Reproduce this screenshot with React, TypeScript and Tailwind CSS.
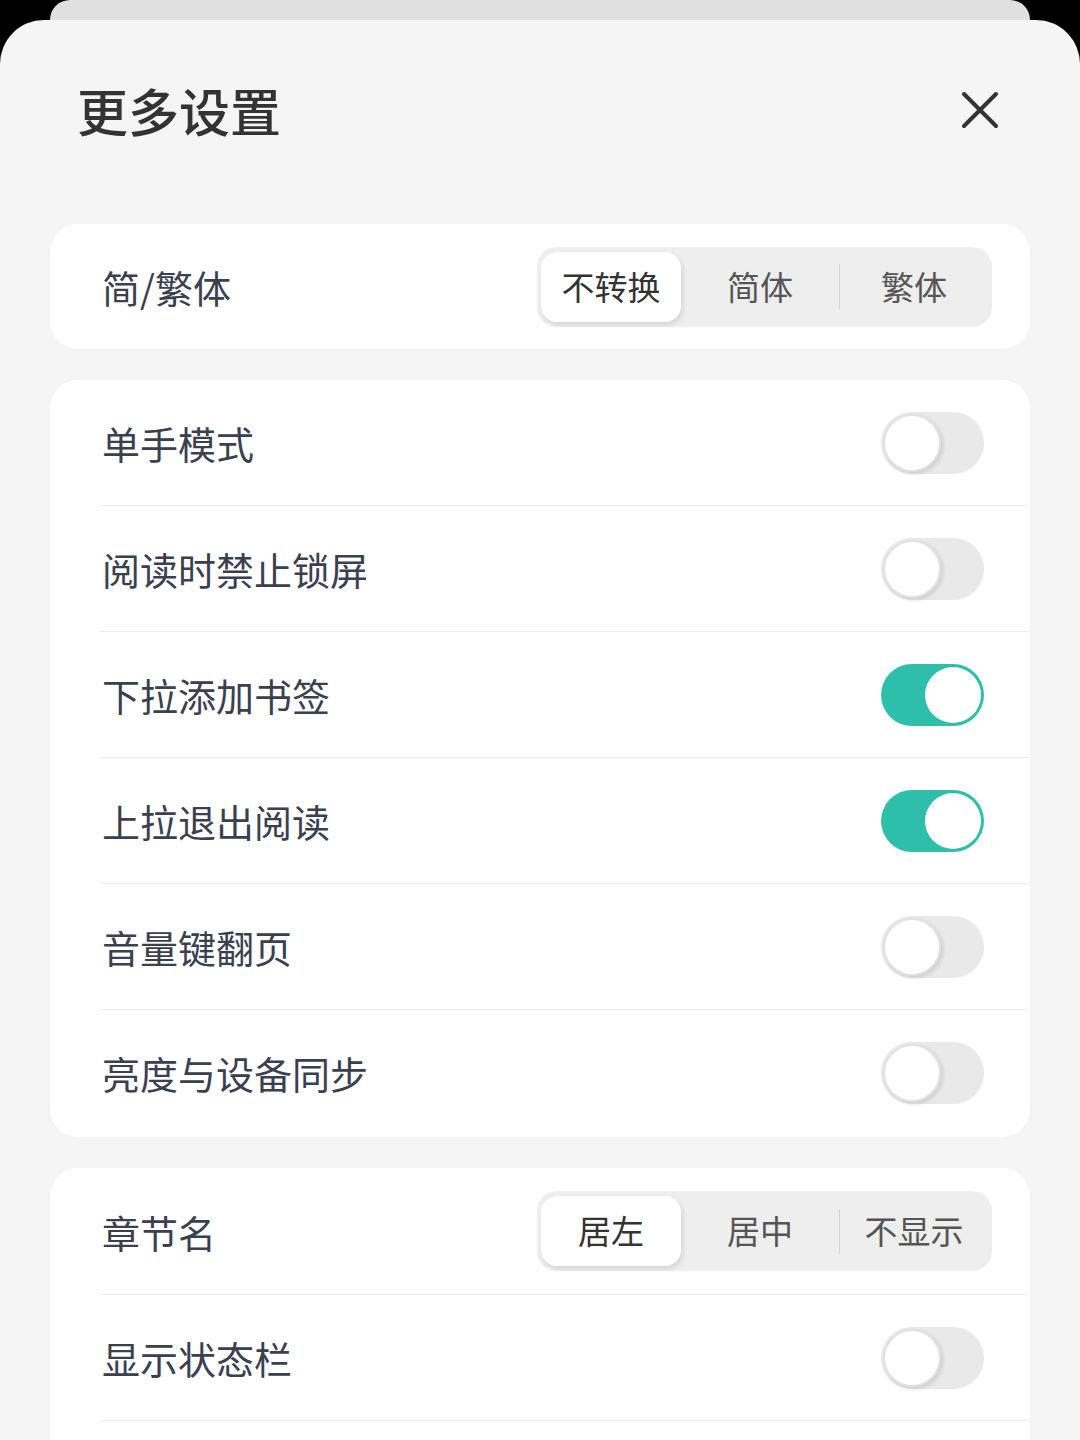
import { useState } from 'react';

const font = { fontFamily: '"Noto Sans CJK SC", "Noto Sans", sans-serif' };

function Toggle({ on, onChange }: { on: boolean; onChange: () => void }) {
  return (
    <button
      onClick={onChange}
      className={`w-[103px] h-[62px] rounded-full flex items-center p-[3px] ${
        on ? 'bg-[#2dbfaa] justify-end' : 'bg-[#e9e9e9] justify-start'
      }`}
    >
      <span
        className={`block rounded-full bg-white ${
          on
            ? 'w-[56px] h-[56px]'
            : 'w-[58px] h-[58px] -ml-[1px] border-[2px] border-[#e2e2e2] shadow-[2px_2px_4px_rgba(0,0,0,0.12)]'
        }`}
      />
    </button>
  );
}

function Segmented({ options, value, onChange }: { options: string[]; value: number; onChange: (i: number) => void }) {
  const widths = ['w-[140px]', 'w-[158px]', 'w-[148px]'];
  return (
    <div className="flex items-center h-[80px] p-[4px] rounded-[20px] bg-[#eeeeee]">
      {options.map((opt, i) => (
        <div key={opt} className="flex items-center h-full">
          {i === 2 && value === 0 && <div className="w-px h-[45px] bg-[#d6d6d6]" />}
          <button
            onClick={() => onChange(i)}
            className={`${widths[i]} h-[70px] rounded-[16px] text-[33px] ${
              value === i
                ? 'bg-white text-[#333] shadow-[2px_3px_5px_rgba(0,0,0,0.1)]'
                : 'text-[#555]'
            }`}
          >
            {opt}
          </button>
        </div>
      ))}
    </div>
  );
}

function Divider() {
  return <div className="ml-[50px] h-px bg-[#ececec]" />;
}

export default function App() {
  const [convert, setConvert] = useState(0);
  const [chapter, setChapter] = useState(0);
  const [toggles, setToggles] = useState<Record<string, boolean>>({
    单手模式: false,
    阅读时禁止锁屏: false,
    下拉添加书签: true,
    上拉退出阅读: true,
    音量键翻页: false,
    亮度与设备同步: false,
    显示状态栏: false,
  });
  const flip = (k: string) => setToggles(t => ({ ...t, [k]: !t[k] }));
  const mainRows = ['单手模式', '阅读时禁止锁屏', '下拉添加书签', '上拉退出阅读', '音量键翻页', '亮度与设备同步'];

  return (
    <div className="w-[1080px] h-[1440px] overflow-hidden bg-black" style={font}>
      <div className="mx-[50px] h-[20px] bg-[#e0e0e0] rounded-t-[22px]" />
      <div className="h-[1420px] bg-[#f5f5f5] rounded-t-[44px] px-[50px]">
        <div className="flex items-center justify-between h-[180px] pl-[27px] pr-[30px]">
          <h1 className="text-[51px] font-medium text-[#333]">更多设置</h1>
          <button className="w-[40px] h-[40px] flex items-center justify-center">
            <svg width="38" height="38" viewBox="0 0 38 38" fill="none" stroke="#333" strokeWidth="4" strokeLinecap="round">
              <path d="M3 3 L35 35 M35 3 L3 35" />
            </svg>
          </button>
        </div>

        <div className="mt-[24px] bg-white rounded-[28px]">
          <div className="flex items-center justify-between h-[125px] pl-[52px] pr-[38px]">
            <span className="text-[38px] text-[#3b4050]">简/繁体</span>
            <Segmented options={['不转换', '简体', '繁体']} value={convert} onChange={setConvert} />
          </div>
        </div>

        <div className="mt-[31px] bg-white rounded-[28px] pb-[2px]">
          {mainRows.map((label, i) => (
            <div key={label}>
              {i > 0 && <Divider />}
              <div className="flex items-center justify-between h-[125px] pl-[52px] pr-[46px]">
                <span className="text-[38px] text-[#3b4050]">{label}</span>
                <Toggle on={toggles[label]} onChange={() => flip(label)} />
              </div>
            </div>
          ))}
        </div>

        <div className="mt-[31px] bg-white rounded-[28px]">
          <div className="flex items-center justify-between h-[126px] pl-[52px] pr-[38px]">
            <span className="text-[38px] text-[#3b4050]">章节名</span>
            <Segmented options={['居左', '居中', '不显示']} value={chapter} onChange={setChapter} />
          </div>
          <Divider />
          <div className="flex items-center justify-between h-[125px] pl-[52px] pr-[46px]">
            <span className="text-[38px] text-[#3b4050]">显示状态栏</span>
            <Toggle on={toggles['显示状态栏']} onChange={() => flip('显示状态栏')} />
          </div>
          <Divider />
          <div className="h-[125px]" />
        </div>
      </div>
    </div>
  );
}
